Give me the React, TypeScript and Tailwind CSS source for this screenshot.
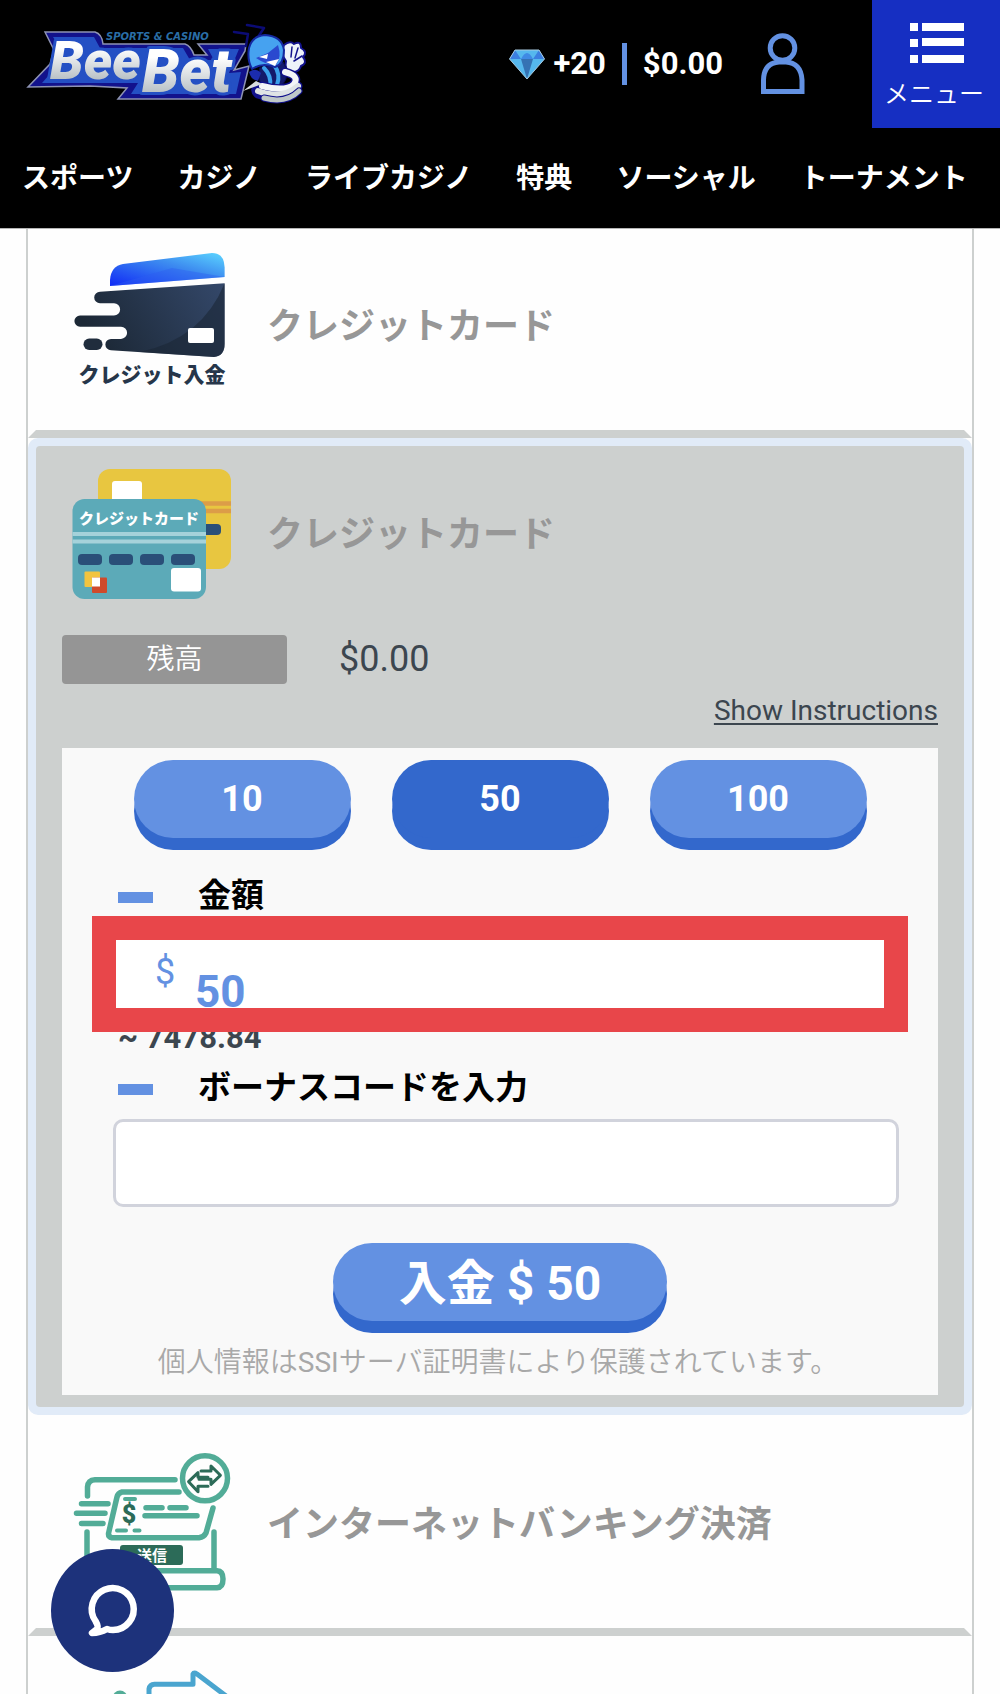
import { useState } from 'react';
import type { ReactNode } from 'react';
import clsx from 'clsx';

const NAV_ITEMS = ['スポーツ', 'カジノ', 'ライブカジノ', '特典', 'ソーシャル', 'トーナメント'];
const AMOUNTS = ['10', '50', '100'];

function Logo() {
  return (
    <svg viewBox="0 0 330 128" className="w-[330px] h-32 shrink-0" role="img" aria-label="BeeBet">
      <defs>
        <linearGradient id="chrome" x1="0" y1="0" x2="0" y2="1">
          <stop offset="0.3" stopColor="#ffffff" />
          <stop offset="0.9" stopColor="#aab4ba" />
        </linearGradient>
      </defs>
      <path
        d="M45 32H95Q102 34 103 44H185Q191 46 194 55H207L198 44H246L245 51L234 70L249 66L241 99H118L127 88L90 86L28 87L50 64L54 50Z"
        fill="#12128c"
        stroke="#8d93b4"
        strokeWidth="1.5"
      />
      <path d="M53 37H94L100 48H183L190 60H214L208 49H239L229 73L241 72L236 94H131L138 83H42L57 66L62 51Z" fill="#2450c4" />
      <g fontFamily="Roboto, sans-serif" fontWeight="900" fontStyle="italic" paintOrder="stroke" strokeLinejoin="round" fill="url(#chrome)" stroke="#2450c4" strokeWidth="6">
        <text x="50" y="79" fontSize="54">Bee</text>
        <text x="142" y="92" fontSize="60">Bet</text>
      </g>
      <text x="106" y="40" fontFamily="DejaVu Sans, sans-serif" fontWeight="bold" fontStyle="italic" fontSize="10" fill="#2a6ea6">
        SPORTS &amp; CASINO
      </text>
      {/* mascot */}
      <g strokeLinecap="round" strokeLinejoin="round">
        <path d="M234 32L248 34L246 46M247 25L264 28L258 37" fill="none" stroke="#0b0b74" strokeWidth="2.5" />
        <path d="M284 45Q290 40 294 44Q301 40 301 48Q308 52 303 57Q308 63 301 66Q299 73 291 72Q284 70 286 61Q280 53 284 45Z" fill="#eef3fa" stroke="#12128c" strokeWidth="2" />
        <path d="M292 47L291 57M298 48L295 58M302 56L294 61" fill="none" stroke="#12128c" strokeWidth="1.5" />
        <path d="M260 68L283 62Q291 74 283 84L268 90Q255 82 260 68Z" fill="#141a6b" stroke="#0b0b54" strokeWidth="1" />
        <path d="M264 68Q272 76 270 87M274 65Q281 74 277 85" fill="none" stroke="#3aa0ec" strokeWidth="4" />
        <path d="M249 72Q256 67 261 73L258 81Q251 80 249 72Z" fill="#1b2cae" />
        <path d="M285 72Q300 76 294 84Q286 92 262 86Q252 88 258 94Q280 102 298 86" fill="none" stroke="#12128c" strokeWidth="9" />
        <path d="M285 72Q300 76 294 84Q286 92 262 86" fill="none" stroke="#f4f6f8" strokeWidth="6" />
        <path d="M258 91Q282 100 298 86" fill="none" stroke="#dfe4e5" strokeWidth="6" />
        <path d="M264 98Q286 104 299 91" fill="none" stroke="#12128c" strokeWidth="7" />
        <path d="M264 98Q286 104 299 91" fill="none" stroke="#bfc8c8" strokeWidth="5" />
        <path d="M243 91L256 81L262 84Z" fill="#d8dde0" />
        <path d="M249 48Q252 36 265 35Q282 36 284 50Q284 64 275 67Q262 62 252 69Q247 60 249 48Z" fill="#46a2f0" stroke="#1428a0" strokeWidth="2" />
        <path d="M256 58L268 53L278 45Q282 57 276 65Q266 65 256 58Z" fill="#2a49cf" />
        <path d="M259 57L268 54L267 59Z" fill="#ffffff" />
        <path d="M266 62L279 59L275 66Z" fill="#ffffff" />
      </g>
    </svg>
  );
}

function DiamondIcon() {
  return (
    <svg viewBox="0 0 36 31" className="w-9 h-[31px]" aria-hidden="true">
      <path d="M6 1H30L35.500 10L18 30L0.500 10Z" fill="#55b8ee" />
      <path d="M6 1L12 10H0.500ZM30 1L35.500 10H24Z" fill="#3b7fe0" />
      <path d="M12 10Q18 -2 24 10Z" fill="#3f8ae4" />
      <path d="M12 10H24L18 30Z" fill="#3572b4" />
      <path d="M6 1H30L35.500 10L18 30L0.500 10Z" fill="none" stroke="#a9cbe0" />
    </svg>
  );
}

function FastCardIcon() {
  return (
    <svg viewBox="0 0 180 150" className="w-[180px] h-[150px] shrink-0" aria-hidden="true">
      <defs>
        <linearGradient id="fastTop" x1="0" y1="1" x2="1" y2="0">
          <stop offset="0" stopColor="#1029f5" />
          <stop offset="0.6" stopColor="#3d8cf0" />
          <stop offset="1" stopColor="#5cd6ff" />
        </linearGradient>
        <linearGradient id="fastBody" x1="0" y1="0.300" x2="1" y2="0">
          <stop offset="0" stopColor="#1c2836" />
          <stop offset="1" stopColor="#34486a" />
        </linearGradient>
      </defs>
      <path d="M48 37V31Q49 17 61 15L150 4Q162 4 162.600 18V28Z" fill="url(#fastTop)" />
      <path d="M48 37L110 19L162.600 28Z" fill="#2d5cf0" opacity="0.400" />
      <path
        d="M162.600 34.300L38 42.700A5.800 5.800 0 0 0 38 54.300H52A6 6 0 0 1 52 66.500H18A5.600 5.600 0 0 0 18 77.700H59A6 6 0 0 1 59 89.900H49A5.600 5.600 0 0 0 49 101.200L152 108Q162.600 107 162.600 95Z"
        fill="url(#fastBody)"
      />
      <path d="M162.600 34.300Q140 90 78 103L152 108Q162.600 107 162.600 95Z" fill="#1b2735" opacity="0.600" />
      <rect x="21.500" y="89.500" width="19" height="11.500" rx="5.700" fill="#202d3d" />
      <rect x="126" y="79" width="26" height="15" rx="2" fill="#ffffff" />
      <text x="90" y="133" textAnchor="middle" fontSize="21" fontWeight="900" fontFamily="'Noto Sans CJK JP', sans-serif" fill="#26364a">
        クレジット入金
      </text>
    </svg>
  );
}

function TwoCardsIcon() {
  return (
    <svg viewBox="0 0 180 150" className="w-[180px] h-[150px] shrink-0" aria-hidden="true">
      <rect x="36" y="12" width="133" height="100" rx="12" fill="#e8c640" />
      <rect x="50" y="24" width="30" height="24" rx="3" fill="#ffffff" />
      <path d="M130 46.500H169M130 54H169" stroke="#dc9d48" strokeWidth="4.500" />
      <rect x="135" y="67" width="24" height="11" rx="4" fill="#2a4f78" />
      <rect x="10.500" y="42" width="133.500" height="100" rx="12" fill="#5caab8" />
      <path d="M10.500 77H144M10.500 84.500H144" stroke="#a5d2da" strokeWidth="4" />
      {[16, 47, 78, 109].map(x => (
        <rect key={x} x={x} y="97" width="24" height="11" rx="4" fill="#2a4f78" />
      ))}
      <rect x="22.500" y="114.500" width="15.500" height="15.500" rx="1" fill="#f2c440" />
      <rect x="30" y="120.500" width="15" height="15.500" rx="1" fill="#cf4a2b" />
      <rect x="30" y="120.500" width="8" height="9" fill="#ffffff" />
      <rect x="109" y="111" width="30" height="23.500" rx="3" fill="#ffffff" />
      <text x="77" y="67" textAnchor="middle" fontSize="15" fontWeight="900" fontFamily="'Noto Sans CJK JP', sans-serif" fill="#ffffff">
        クレジットカード
      </text>
    </svg>
  );
}

function BankTransferIcon() {
  return (
    <svg viewBox="0 0 180 150" className="w-[180px] h-[150px] shrink-0" aria-hidden="true">
      <g fill="none" stroke="#52ac97" strokeWidth="5.500" strokeLinecap="round" strokeLinejoin="round">
        <path d="M25.500 49V40Q26 33 33 32.700H113" />
        <path d="M19.500 56.700H46M14.500 66.300H43M19.500 76.500H41" />
        <path d="M25 85V123M152 85V123" />
        <path d="M20 123.700H155Q161 124 161 132Q161 140.500 155 140.700H20Q14 140 14 132Q14 124 20 123.700Z" />
        <path d="M117 45H60Q56 46 55 50L46.600 86Q46 90 50 90.700H137Q142 90 144 86L151 61" />
        <path d="M84 60.700H100M108 60.700H124M83 68.700H135" />
        <path d="M63 52H73M55 83.500H64M72.500 83.500H77.500" strokeWidth="4" />
        <circle cx="143" cy="31.300" r="22.500" fill="#fefefe" />
      </g>
      <g fill="none" stroke="#2c6b58" strokeWidth="3" strokeLinejoin="round" strokeLinecap="round">
        <path d="M139 24H149V19L158.400 28.300L149 37.300V32.300H137" />
        <path d="M146 39.300H136V44.700L126.600 34.700L136 25.700V30.300H146" />
      </g>
      <text x="67" y="76" textAnchor="middle" fontSize="25" fontWeight="900" fontFamily="Roboto, sans-serif" fill="#2c6b58">$</text>
      <rect x="58" y="98" width="63" height="20" rx="3" fill="#2c6b58" />
      <text x="90" y="114" textAnchor="middle" fontSize="15" fontWeight="700" fontFamily="'Noto Sans CJK JP', sans-serif" fill="#ffffff">送信</text>
    </svg>
  );
}

function PaymentRow({ icon, title }: { icon: ReactNode; title: string }) {
  return (
    <button type="button" className="flex w-full items-center gap-[25px] pl-[26px] text-left">
      {icon}
      <span className="pt-1.5 text-4xl font-bold text-[#979797]">{title}</span>
    </button>
  );
}

function FieldLabel({ htmlFor, children }: { htmlFor: string; children: ReactNode }) {
  return (
    <div className="ml-14 flex h-11 items-center gap-[45px]">
      <span className="mt-1.5 h-[11px] w-[35px] bg-[#6391e2]" />
      <label htmlFor={htmlFor} className="pt-1 text-[33px] leading-[44px] font-bold text-black">
        {children}
      </label>
    </div>
  );
}

export default function App() {
  const [amount, setAmount] = useState('50');
  const [bonusCode, setBonusCode] = useState('');

  return (
    <div className="bg-[#fefefe] font-['Roboto','Noto_Sans_CJK_JP',sans-serif]">
      <header className="relative z-10 bg-black text-white border-b border-[#b5b5b5]">
        <div className="flex h-32 items-center">
          <Logo />
          <div className="ml-auto flex items-center text-[31px] font-bold">
            <DiamondIcon />
            <span className="ml-2">+20</span>
            <span className="mx-4 h-[42px] w-[5px] bg-[#6391e2]" />
            <span>$0.00</span>
          </div>
          <button type="button" aria-label="アカウント" className="mr-[67px] ml-[38px]">
            <svg viewBox="0 0 44 62" className="h-[62px] w-11" fill="none" stroke="#6391e2" strokeWidth="5">
              <circle cx="21.500" cy="15" r="12.300" />
              <path d="M2.500 58.500V47Q3 30 18 29H25Q40 30 41 47V58.500Z" />
            </svg>
          </button>
          <button type="button" className="flex h-32 w-32 flex-col items-center bg-[#162fc2] pt-[23px]">
            <svg viewBox="0 0 54 40" className="ml-0.5 h-10 w-[54px]" fill="#ffffff" aria-hidden="true">
              <path d="M0 0H8V8H0ZM12 0H54V8H12ZM0 16H8V24H0ZM12 15H54V23H12ZM0 32H8V40H0ZM12 32H54V40H12Z" />
            </svg>
            <span className="mt-3 pr-1 text-[25px] leading-10 font-[350]">メニュー</span>
          </button>
        </div>
        <nav className="flex h-[100px] gap-11 px-[22px] pt-[31px] text-[28px] leading-10 font-bold whitespace-nowrap">
          {NAV_ITEMS.map(item => (
            <a key={item} href="#">{item}</a>
          ))}
        </nav>
      </header>

      <main className="mx-[26px] -mt-3 border-x-2 border-[#cdd0cf]">
        <section className="flex h-[221px] items-center border-8 border-t-0 border-x-transparent border-b-[#cdd0cf]">
          <PaymentRow icon={<FastCardIcon />} title="クレジットカード" />
        </section>

        <section className="rounded-[10px] border-8 border-[#e1ebf8] bg-[#e1ebf8]">
          <div className="rounded-sm bg-[#cdd0cf] px-[26px] pb-3">
            <div className="-mx-[26px] flex h-[172px] items-center">
              <PaymentRow icon={<TwoCardsIcon />} title="クレジットカード" />
            </div>
            <div className="flex items-center gap-[52px] pt-[17px] text-[#3c464f]">
              <span className="w-[225px] rounded bg-[#959595] text-center text-[28px] leading-[49px] font-[350] text-white">残高</span>
              <span className="pb-0.5 text-4xl">$0.00</span>
            </div>
            <div className="mt-[7px] mb-[17px] text-right">
              <a href="#" className="text-[28px] leading-10 text-[#3c464f] underline decoration-2 underline-offset-3">
                Show Instructions
              </a>
            </div>

            <form className="bg-[#f9f9f9] py-3" onSubmit={e => e.preventDefault()}>
              <div className="flex justify-center gap-[41px]">
                {AMOUNTS.map(value => (
                  <button
                    key={value}
                    type="button"
                    onClick={() => setAmount(value)}
                    className={clsx(
                      'mb-3 h-[78px] w-[217px] rounded-full text-4xl font-bold text-white shadow-[0_12px_0_#3368cc]',
                      value === amount ? 'bg-[#3368cc]' : 'bg-[#6391e2]'
                    )}
                  >
                    {value}
                  </button>
                ))}
              </div>

              <div className="mt-[22px]">
                <FieldLabel htmlFor="amount">金額</FieldLabel>
              </div>
              <div className="relative mx-[30px]">
                <div className="mx-5 flex h-[100px] bg-white text-[#6391e2]">
                  <span className="ml-[43px] w-10 pt-9 text-4xl leading-10">$</span>
                  <input
                    id="amount"
                    value={amount}
                    onChange={e => setAmount(e.target.value)}
                    className="min-w-0 flex-1 pt-[52px] text-[44px] leading-[48px] font-bold outline-none"
                  />
                </div>
                <div className="pointer-events-none absolute inset-x-0 top-0 h-[116px] border-[24px] border-[#e8464a]" />
              </div>
              <p className="ml-14 pt-0.5 text-[31px] leading-10 font-bold text-[#3c464f]">~ 7478.84</p>

              <div className="mt-1.5">
                <FieldLabel htmlFor="bonus">ボーナスコードを入力</FieldLabel>
              </div>
              <div className="mt-[11px] mr-[39px] ml-[51px]">
                <input
                  id="bonus"
                  value={bonusCode}
                  onChange={e => setBonusCode(e.target.value)}
                  className="block h-[88px] w-full rounded-[10px] border-3 border-[#d1d3dc] bg-white px-6 text-4xl outline-none"
                />
              </div>

              <button
                type="submit"
                className="mx-auto mt-9 block h-[78px] w-[334px] rounded-full bg-[#6391e2] pt-1 text-5xl font-bold text-white shadow-[0_12px_0_#3368cc]"
              >
                入金 $ {amount}
              </button>
              <p className="mt-[22px] pr-1 text-center text-[28px] leading-10 font-[350] whitespace-nowrap text-[#a8a8a8]">
                個人情報は<span className="font-normal">SSI</span>サーバ証明書により保護されています。
              </p>
            </form>
          </div>
        </section>

        <section className="flex h-[221px] items-center border-8 border-t-0 border-x-transparent border-b-[#cdd0cf]">
          <PaymentRow icon={<BankTransferIcon />} title="インターネットバンキング決済" />
        </section>

        <section className="px-[34px] pt-[30px]">
          <svg viewBox="0 0 180 30" className="block h-[30px] w-[180px]" aria-hidden="true">
            <path d="M87 34V23Q88 18 93 18.300H131V8Q132 6 135 8L168 33" fill="none" stroke="#4aa5cf" strokeWidth="5" strokeLinejoin="round" />
            <circle cx="58" cy="32" r="7.500" fill="#52ac97" />
          </svg>
        </section>
      </main>

      <button type="button" aria-label="チャット" className="fixed bottom-[22px] left-[51px] z-20 size-[123px] rounded-full bg-[#1d327b]">
        <svg viewBox="0 0 123 123" className="size-[123px]" fill="none" stroke="#ffffff" strokeWidth="6.500" strokeLinejoin="round">
          <path d="M62 81A21 21 0 1 0 44.500 72Q48 78 46 80L41 84Q49 84 56 80Q59 81 62 81Z" />
        </svg>
      </button>
    </div>
  );
}
